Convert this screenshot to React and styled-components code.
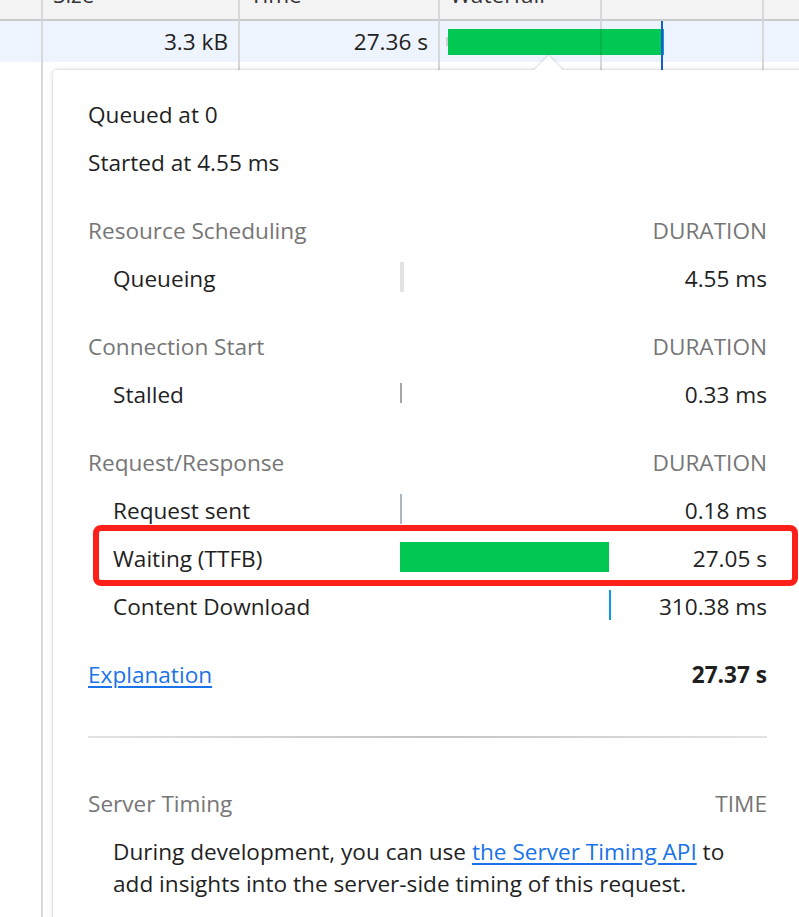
import React from "react";
import styled, { createGlobalStyle } from "styled-components";

const GlobalStyle = createGlobalStyle`
  html, body { margin: 0; padding: 0; background: #ffffff; }
  body {
    font-family: "Open Sans", "Noto Sans", sans-serif;
    font-size: 22.6px;
    color: #1f1f1f;
    overflow: hidden;
  }
`;

const Page = styled.div`
  position: relative;
  width: 799px;
  height: 917px;
  overflow: hidden;
  background: #ffffff;
`;

/* ---------- network table behind the popover ---------- */

const TableGrid = styled.div`
  display: grid;
  grid-template-columns: 41px 197px 200px 162px 162px 1fr;
  grid-template-rows: 21px 41px 1fr;
  height: 917px;
`;

const ColumnCell = styled.div`
  grid-row: ${(p) => p.$row};
  grid-column: ${(p) => p.$col};
  box-sizing: border-box;
  border-left: ${(p) => (p.$col === 1 ? "none" : "2px solid #d8d8d8")};
  min-width: 0;
`;

const HeaderCell = styled(ColumnCell)`
  background: #f3f3f3;
  border-bottom: 2px solid #cbcbcb;
  padding: 0 10px;
  color: #333333;
  line-height: 22px;
  white-space: nowrap;
`;

const HeaderLabel = styled.div`
  margin-top: -16px;
`;

const DataCell = styled(ColumnCell)`
  background: #eef4fd;
  padding: 0 10px;
  line-height: 42px;
  text-align: ${(p) => p.$align || "left"};
  white-space: nowrap;
  color: #1f1f1f;
`;

const FillerCell = styled(ColumnCell)`
  background: #ffffff;
`;

const WaterfallLayer = styled.div`
  grid-column: 4 / 6;
  grid-row: 2 / 4;
  position: relative;
  pointer-events: none;
  z-index: 1;
`;

const WaterfallPiece = styled.div`
  position: absolute;
  background: ${(p) => p.$color};
`;

/* ---------- popover ---------- */

const Popover = styled.div`
  position: absolute;
  left: 53px;
  top: 70px;
  width: 770px;
  min-height: 900px;
  box-sizing: border-box;
  padding: 21px 56px 40px 35px;
  background: #ffffff;
  border-radius: 4px;
  box-shadow: 0 0 3px rgba(0, 0, 0, 0.18), 0 0 9px rgba(0, 0, 0, 0.08);
  z-index: 2;
`;

const ArrowClip = styled.div`
  position: absolute;
  left: 479px;
  top: -16px;
  width: 32px;
  height: 16px;
  overflow: hidden;
`;

const ArrowSquare = styled.div`
  position: absolute;
  left: 5.5px;
  top: 5.5px;
  width: 21px;
  height: 21px;
  background: #ffffff;
  transform: rotate(45deg);
  box-shadow: 0 0 3px rgba(0, 0, 0, 0.22);
`;

const TimingRow = styled.div`
  display: grid;
  grid-template-columns: 312px 211px 1fr;
  align-items: center;
  box-sizing: border-box;
  height: ${(p) => (p.$section ? "68px" : "48px")};
  padding-top: ${(p) => (p.$section ? "20px" : "0")};
  line-height: 48px;
  white-space: nowrap;
`;

const Label = styled.div`
  padding-left: ${(p) => (p.$indent ? "25px" : "0")};
  color: ${(p) => (p.$muted ? "#767676" : "#1f1f1f")};
  grid-column: ${(p) => (p.$wide ? "1 / 3" : "auto")};
`;

const Value = styled.div`
  grid-column: 3;
  text-align: right;
  color: ${(p) => (p.$muted ? "#767676" : "#1f1f1f")};
  font-weight: ${(p) => (p.$bold ? 700 : 400)};
`;

const BarTrack = styled.div`
  position: relative;
  height: 30px;
  margin-bottom: 5px;
`;

const Bar = styled.div`
  position: absolute;
  top: ${(p) => (p.$short ? "5px" : "0")};
  bottom: ${(p) => (p.$short ? "5px" : "0")};
  background: ${(p) => p.$color};
`;

const Link = styled.a`
  color: #1a73e8;
  text-decoration: underline;
  text-underline-offset: 3px;
  cursor: pointer;
`;

const Divider = styled.div`
  height: 2px;
  margin: 37px 0 22px;
  background: linear-gradient(to right, #e2e2e2, #c4c4c4 50%, #e2e2e2);
`;

const Paragraph = styled.p`
  margin: 8px 0 0;
  padding-left: 25px;
  line-height: 32px;
  color: #1f1f1f;
`;

const Annotation = styled.div`
  position: absolute;
  left: 93px;
  top: 525px;
  width: 705px;
  height: 61px;
  box-sizing: border-box;
  border: 6px solid #fd1f1a;
  border-radius: 8px;
  z-index: 3;
  pointer-events: none;
`;

const TOTAL = 27370;

const sections = [
  {
    title: "Resource Scheduling",
    rows: [
      { label: "Queueing", start: 0, dur: 4.55, min: 4, color: "#e2e2e2", value: "4.55 ms" },
    ],
  },
  {
    title: "Connection Start",
    rows: [
      { label: "Stalled", start: 0, dur: 0.33, min: 1.5, color: "#a6a6a6", value: "0.33 ms", short: true },
    ],
  },
  {
    title: "Request/Response",
    rows: [
      { label: "Request sent", start: 0.5, dur: 0.18, min: 1.5, color: "#aab8c6", value: "0.18 ms" },
      { label: "Waiting (TTFB)", start: 0, dur: 27050, min: 1, color: "#00c853", value: "27.05 s" },
      { label: "Content Download", start: 27055, dur: 310.38, min: 1, color: "#0a9be6", value: "310.38 ms" },
    ],
  },
];

function TimingBar({ row }) {
  const left = (row.start / TOTAL) * 211;
  const width = Math.max((row.dur / TOTAL) * 211, row.min);
  return (
    <BarTrack>
      <Bar $color={row.color} $short={row.short} style={{ left: `${left}px`, width: `${width}px` }} />
    </BarTrack>
  );
}

const cols = [
  { head: "", value: "", align: "left" },
  { head: "Size", value: "3.3 kB", align: "right" },
  { head: "Time", value: "27.36 s", align: "right" },
  { head: "Waterfall", value: "", align: "left" },
  { head: "", value: "", align: "left" },
  { head: "", value: "", align: "left" },
];

export default function App() {
  return (
    <Page>
      <GlobalStyle />
      <TableGrid>
        {cols.map((c, i) => (
          <HeaderCell key={`h${i}`} $row={1} $col={i + 1}>
            <HeaderLabel>{c.head}</HeaderLabel>
          </HeaderCell>
        ))}
        {cols.map((c, i) => (
          <DataCell key={`d${i}`} $row={2} $col={i + 1} $align={c.align}>
            {c.value}
          </DataCell>
        ))}
        {cols.map((c, i) => (
          <FillerCell key={`f${i}`} $row={3} $col={i + 1} />
        ))}
        <WaterfallLayer>
          <WaterfallPiece $color="#cfcfcf" style={{ left: 8, top: 16, width: 2, height: 9 }} />
          <WaterfallPiece $color="#00c853" style={{ left: 10, top: 8, width: 213, height: 26 }} />
          <WaterfallPiece $color="rgba(0,0,0,0.1)" style={{ left: 162, top: 8, width: 2, height: 26 }} />
          <WaterfallPiece $color="#1590e8" style={{ left: 223, top: 8, width: 3, height: 26 }} />
          <WaterfallPiece $color="#1460c8" style={{ left: 223, top: 0, width: 2, height: 900 }} />
        </WaterfallLayer>
      </TableGrid>

      <Popover>
        <ArrowClip>
          <ArrowSquare />
        </ArrowClip>

        <TimingRow>
          <Label $wide>Queued at 0</Label>
        </TimingRow>
        <TimingRow>
          <Label $wide>Started at 4.55 ms</Label>
        </TimingRow>

        {sections.map((s) => (
          <React.Fragment key={s.title}>
            <TimingRow $section>
              <Label $muted $wide>{s.title}</Label>
              <Value $muted>DURATION</Value>
            </TimingRow>
            {s.rows.map((r) => (
              <TimingRow key={r.label}>
                <Label $indent>{r.label}</Label>
                <TimingBar row={r} />
                <Value>{r.value}</Value>
              </TimingRow>
            ))}
          </React.Fragment>
        ))}

        <TimingRow $section>
          <Label $wide>
            <Link>Explanation</Link>
          </Label>
          <Value $bold>27.37 s</Value>
        </TimingRow>

        <Divider />

        <TimingRow $section>
          <Label $muted $wide>Server Timing</Label>
          <Value $muted>TIME</Value>
        </TimingRow>
        <Paragraph>
          During development, you can use <Link>the Server Timing API</Link> to
          <br />
          add insights into the server-side timing of this request.
        </Paragraph>
      </Popover>

      <Annotation />
    </Page>
  );
}
